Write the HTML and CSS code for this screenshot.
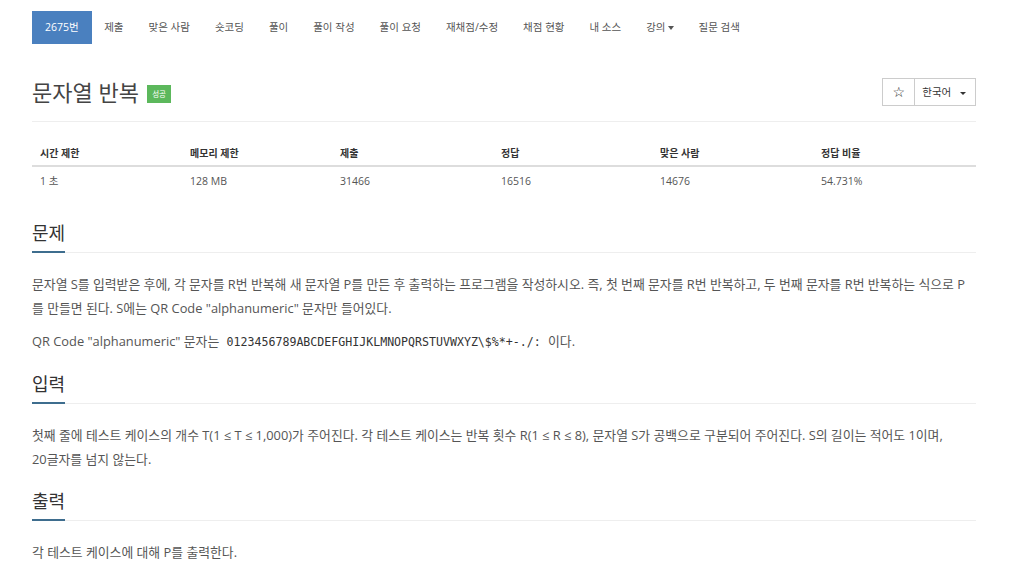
FILE: index.html
```html
<!DOCTYPE html>
<html lang="ko">
<head>
  <meta charset="UTF-8"/>
  <title>문자열 반복</title>
  <link rel="stylesheet" href="styles.css">
</head>
<body>
  <div class="page">

    <!-- Problem menu -->
    <ul class="problem-menu">
      <li class="active">2675번</li>
      <li>제출</li>
      <li>맞은 사람</li>
      <li>숏코딩</li>
      <li>풀이</li>
      <li>풀이 작성</li>
      <li>풀이 요청</li>
      <li>재채점/수정</li>
      <li>채점 현황</li>
      <li>내 소스</li>
      <li>강의<span class="caret"></span></li>
      <li>질문 검색</li>
    </ul>

    <!-- Title -->
    <div class="page-header">
      <h1>문자열 반복 <span class="label-success">성공</span></h1>
      <div class="btn-group">
        <span class="btn star">☆</span>
        <span class="btn lang">한국어 <span class="caret"></span></span>
      </div>
    </div>

    <!-- Limits -->
    <table class="problem-info">
      <thead>
        <tr>
          <th class="c1">시간 제한</th>
          <th class="c2">메모리 제한</th>
          <th class="c3">제출</th>
          <th class="c4">정답</th>
          <th class="c5">맞은 사람</th>
          <th class="c6">정답 비율</th>
        </tr>
      </thead>
      <tbody>
        <tr>
          <td>1 초</td>
          <td>128 MB</td>
          <td>31466</td>
          <td>16516</td>
          <td>14676</td>
          <td>54.731%</td>
        </tr>
      </tbody>
    </table>

    <section class="problem-section">
      <div class="headline"><h2>문제</h2></div>
      <p>문자열 S를 입력받은 후에, 각 문자를 R번 반복해 새 문자열 P를 만든 후 출력하는 프로그램을 작성하시오. 즉, 첫 번째 문자를 R번 반복하고, 두 번째 문자를 R번 반복하는 식으로 P를 만들면 된다. S에는 QR Code "alphanumeric" 문자만 들어있다.</p>
      <p>QR Code "alphanumeric" 문자는 <code>0123456789ABCDEFGHIJKLMNOPQRSTUVWXYZ\$%*+-./:</code> 이다.</p>
    </section>

    <section class="problem-section">
      <div class="headline"><h2>입력</h2></div>
      <p>첫째 줄에 테스트 케이스의 개수 T(1 ≤ T ≤ 1,000)가 주어진다. 각 테스트 케이스는 반복 횟수 R(1 ≤ R ≤ 8), 문자열 S가 공백으로 구분되어 주어진다. S의 길이는 적어도 1이며, <span class="nobr">20글자를</span> 넘지 않는다.</p>
    </section>

    <section class="problem-section">
      <div class="headline"><h2>출력</h2></div>
      <p>각 테스트 케이스에 대해 P를 출력한다.</p>
    </section>

  </div>
</body>
</html>
```

FILE: styles.css
```css
body {
  margin: 0;
  background: #fff;
  color: #555;
  font-family: 'Open Sans', 'Noto Sans CJK KR', sans-serif;
  font-size: 12.85px;
}

.page {
  width: 944px;
  margin-left: 32px;
  padding-top: 11px;
}

.problem-menu {
  display: flex;
  list-style: none;
  margin: 0;
  padding: 0;
}

.problem-menu li {
  padding: 0 12.5px;
  height: 33px;
  line-height: 33px;
  font-size: 10.5px;
  color: #555;
}

.problem-menu li.active {
  padding: 0 13px;
  background: #4a80bf;
  color: #fff;
}

.caret {
  display: inline-block;
  width: 0;
  height: 0;
  margin-left: 2px;
  vertical-align: middle;
  border-top: 4px solid;
  border-left: 3px solid transparent;
  border-right: 3px solid transparent;
}

.page-header {
  display: flex;
  justify-content: space-between;
  align-items: center;
  margin-top: 28px;
  padding-bottom: 9px;
  border-bottom: 1px solid #eee;
}

.page-header h1 {
  margin: 0;
  font-size: 22px;
  font-weight: 400;
  color: #444;
  line-height: 40px;
}

.label-success {
  display: inline-block;
  vertical-align: 4px;
  margin-left: 2px;
  background: #5cb85c;
  color: #fff;
  font-size: 7.5px;
  padding: 0 5.5px;
  line-height: 18px;
  height: 18px;
}

.btn-group {
  display: flex;
  border: 1px solid #ccc;
}

.btn {
  height: 26px;
  line-height: 26px;
  font-size: 10.5px;
  color: #333;
}

.star {
  width: 31px;
  text-align: center;
  border-right: 1px solid #ccc;
  font-family: 'DejaVu Sans', sans-serif;
  font-size: 14px;
  color: #222;
}

.lang {
  padding: 0 9px 0 7px;
}

.lang .caret {
  margin-left: 6px;
  border-top-width: 3px;
  border-left-width: 3px;
  border-right-width: 3px;
}

.problem-info {
  width: 100%;
  border-collapse: collapse;
  margin-top: 14px;
  margin-bottom: 25px;
}

.problem-info th {
  text-align: left;
  font-size: 10px;
  font-weight: 700;
  color: #333;
  padding: 9px 8px 5px;
  border-bottom: 2px solid #ddd;
}

.problem-info td {
  padding: 6px 8px 7px;
  font-size: 10.5px;
  color: #555;
}

.c1, .c2 { width: 134px; }
.c3 { width: 145px; }
.c4 { width: 143px; }
.c5 { width: 145px; }

.problem-section {
  margin-bottom: 17px;
}

.headline {
  border-bottom: 1px solid #eee;
  margin-bottom: 19px;
}

.headline h2 {
  display: inline-block;
  margin: 0 0 -1px;
  padding-bottom: 5px;
  font-size: 18px;
  font-weight: 400;
  color: #333;
  line-height: 26px;
  border-bottom: 2px solid #3e6d8e;
}

.problem-section p {
  margin: 0 0 9px;
  line-height: 24px;
}

.nobr {
  white-space: nowrap;
}

code {
  font-family: 'DejaVu Sans Mono', monospace;
  font-size: 11.6px;
  color: #333;
  padding: 0 4px;
}
```
